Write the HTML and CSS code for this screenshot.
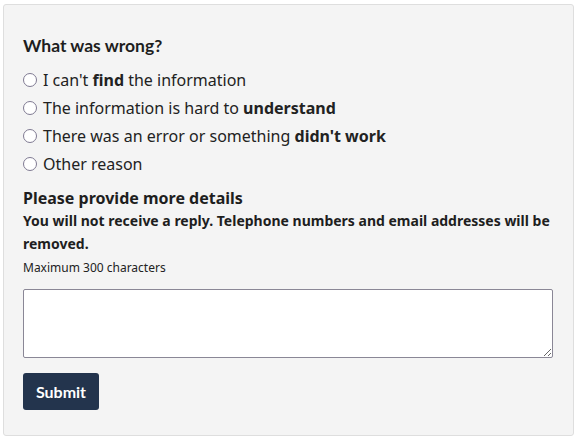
FILE: index.html
```html
<!DOCTYPE html>
<html lang="en">
<head>
<meta charset="utf-8">
<link rel="stylesheet" href="styles.css">
</head>
<body>
<form class="panel">
  <fieldset class="group">
    <legend class="title">What was wrong?</legend>
    <label class="option"><input type="radio" name="r"><span>I can't <b>find</b> the information</span></label>
    <label class="option"><input type="radio" name="r"><span>The information is hard to <b>understand</b></span></label>
    <label class="option"><input type="radio" name="r"><span>There was an error or something <b>didn't work</b></span></label>
    <label class="option"><input type="radio" name="r"><span>Other reason</span></label>
  </fieldset>
  <div class="details">
    <div class="label">Please provide more details</div>
    <p class="hint">You will not receive a reply. Telephone numbers and email addresses will be removed.</p>
    <p class="max">Maximum 300 characters</p>
    <textarea class="box"></textarea>
  </div>
  <button type="button" class="submit">Submit</button>
</form>
</body>
</html>
```

FILE: styles.css
```css
html, body {
  margin: 0;
  padding: 0;
  background: #ffffff;
}
body {
  padding: 4px 6px 6px 3px;
  font-family: "Noto Sans", "Open Sans", sans-serif;
  color: #222;
}
.panel {
  box-sizing: border-box;
  width: 571px;
  height: 432px;
  background: #f4f4f4;
  border: 1px solid #dedede;
  border-radius: 3px;
  padding: 30px 19px 0 19px;
  display: flex;
  flex-direction: column;
}
.group {
  border: 0;
  margin: 0;
  padding: 0;
  display: flex;
  flex-direction: column;
}
.title {
  padding: 0;
  font-family: Lato, sans-serif;
  font-weight: 700;
  font-size: 17.5px;
  line-height: 22px;
  color: #1e1e1e;
  margin-bottom: 9px;
}
.option {
  display: flex;
  align-items: center;
  height: 28px;
  font-size: 16px;
  color: #222;
}
.option input {
  margin: 0 6px 0 0;
  width: 14px;
  height: 14px;
  appearance: none;
  -webkit-appearance: none;
  border: 1.5px solid #7f7a92;
  border-radius: 50%;
  background: #fff;
  box-sizing: border-box;
}
.option b { font-weight: 700; }
.details {
  margin-top: 9px;
}
.label {
  font-weight: 700;
  font-size: 16px;
  line-height: 22px;
  color: #1e1e1e;
}
.hint {
  margin: 0;
  font-weight: 700;
  font-size: 14px;
  line-height: 23px;
  color: #1e1e1e;
}
.max {
  margin: 2px 0 0;
  font-size: 12px;
  line-height: 22px;
  color: #222;
}
.box {
  display: block;
  box-sizing: border-box;
  width: 530px;
  height: 69px;
  margin-top: 10px;
  border: 1px solid #8a8796;
  border-radius: 2px;
  background: #fff;
  resize: vertical;
}
.submit {
  align-self: flex-start;
  margin-top: 15px;
  height: 37px;
  width: 76px;
  border: 0;
  border-radius: 3px;
  background: #23344d;
  color: #fff;
  font-family: Lato, sans-serif;
  font-weight: 700;
  font-size: 16px;
  padding: 0;
}
```
